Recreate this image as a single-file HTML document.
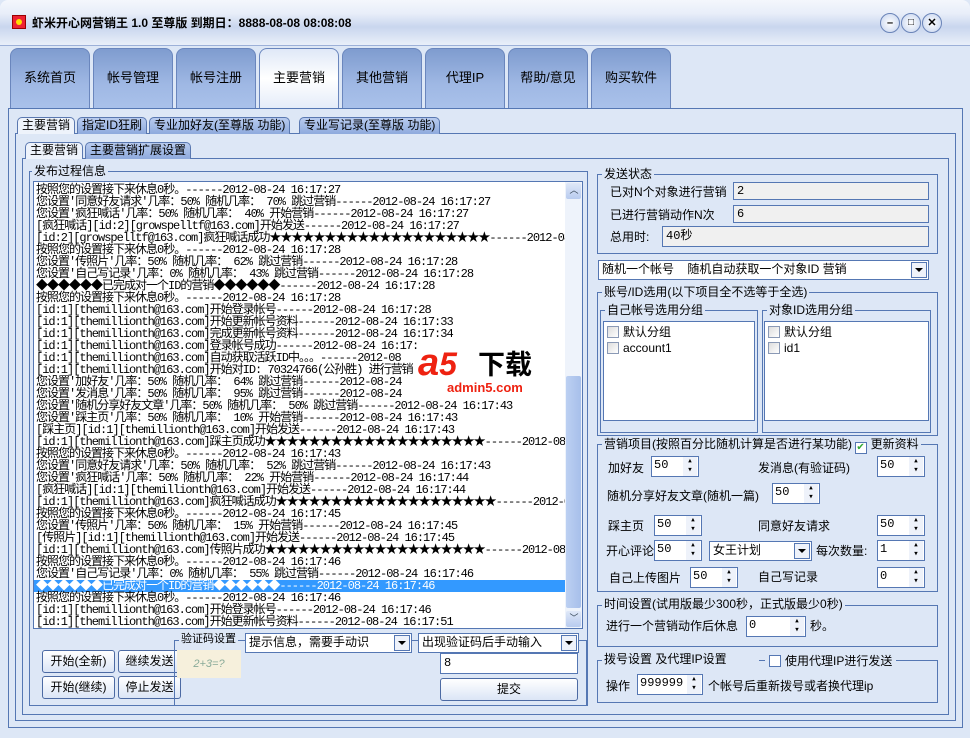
<!DOCTYPE html>
<html><head><meta charset="utf-8"><style>
*{box-sizing:border-box;margin:0;padding:0}
body{width:970px;height:738px;overflow:hidden;background:#dde7f6;font-family:"Liberation Sans","Noto Sans CJK SC",sans-serif;font-size:12px;color:#000;position:relative}
.a{position:absolute}
.tab{position:absolute;top:48px;width:80px;height:60px;border:1px solid #6a86bd;border-bottom:none;border-radius:8px 8px 0 0;background:linear-gradient(#7f9ccf,#9fb8e4 60%,#a9c1ea);text-align:center;line-height:58px;font-size:13px}
.tab.on{background:linear-gradient(#dfe8f7,#fff 50%,#e4ecf9)}
.st{position:absolute;height:17px;border:1px solid #5a78b0;border-bottom:none;border-radius:5px 5px 0 0;background:linear-gradient(#b8cbef,#8eaadd);font-size:12px;line-height:15px;padding:0 4px;white-space:nowrap}
.st.on{background:#eef3fb}
.box{position:absolute;border:1px solid #5577b3}
.grp{position:absolute;border:1px solid #5577b3}
.grp>.t{position:absolute;top:-9px;left:4px;background:#dde7f6;padding:0 2px;line-height:16px;white-space:nowrap;font-size:12px}
.in{position:absolute;border:1px solid #5577b3;background:#f0f0f0;font-size:12px;line-height:16px;padding-left:3px;font-family:"Liberation Mono",monospace}
.wh{background:#fff}
.dd{position:absolute;border:1px solid #5577b3;background:#fff;line-height:17px;padding-left:3px;white-space:nowrap;overflow:hidden}
.dd::after{content:"";position:absolute;right:1px;top:1px;width:14px;bottom:1px;border:1px solid #5577b3;background:#eef2fa}
.dd i{position:absolute;right:5px;top:7px;border:4px solid transparent;border-top:4px solid #000;z-index:2}
.sp{position:absolute;border:1px solid #5577b3;background:#fff;height:21px;line-height:17px;padding-left:2px;font-family:"Liberation Mono",monospace}
.sp::after{content:"▴\A▾";white-space:pre;position:absolute;right:1px;top:0;width:14px;height:19px;background:#eef2fa;font-size:9px;line-height:9px;text-align:center}
.btn{position:absolute;border:1px solid #4c6aa3;border-radius:3px;background:linear-gradient(#fff,#dbe5f6);text-align:center;line-height:20px;font-size:12px}
.log{position:absolute;left:33px;top:181px;width:550px;height:448px;border:1px solid #5577b3;background:#fff;overflow:hidden;padding-top:2px}
.log div{height:12px;line-height:12px;font-family:"Liberation Mono","Noto Sans CJK SC",monospace;font-size:12px;white-space:nowrap;padding-left:2px;letter-spacing:-1px}
.cb{display:inline-block;width:12px;height:12px;border:1px solid #8a99b5;background:linear-gradient(135deg,#ddd,#fff);vertical-align:-2px;margin-right:4px}
</style></head><body>
<div class="a" style="left:0;top:0;width:970px;height:46px;background:linear-gradient(#f4f7fc,#e8eef9 30%,#c9d6ee 60%,#e9eff9);border-bottom:1px solid #9cb0d8;border-radius:8px 8px 0 0"></div>
<div class="a" style="left:12px;top:15px;width:14px;height:14px;background:#e23;border:1px solid #900"><div style="margin:3px;width:6px;height:6px;background:#fd0;border-radius:50%"></div></div>
<div class="a" style="left:32px;top:14px;font-weight:bold;font-size:12px;white-space:nowrap">虾米开心网营销王 1.0 至尊版 到期日：8888-08-08 08:08:08</div>
<div class="a" style="left:880px;top:13px;width:20px;height:20px;border-radius:50%;border:1px solid #6a84b8;background:radial-gradient(#fff,#c3d2ee);text-align:center;line-height:18px;font-weight:bold;font-size:11px">–</div>
<div class="a" style="left:901px;top:13px;width:20px;height:20px;border-radius:50%;border:1px solid #6a84b8;background:radial-gradient(#fff,#c3d2ee);text-align:center;line-height:18px;font-size:10px;font-weight:bold">□</div>
<div class="a" style="left:922px;top:13px;width:20px;height:20px;border-radius:50%;border:1px solid #6a84b8;background:radial-gradient(#fff,#c3d2ee);text-align:center;line-height:18px;font-weight:bold;font-size:11px">✕</div>
<div class="tab" style="left:10px">系统首页</div>
<div class="tab" style="left:93px">帐号管理</div>
<div class="tab" style="left:176px">帐号注册</div>
<div class="tab on" style="left:259px">主要营销</div>
<div class="tab" style="left:342px">其他营销</div>
<div class="tab" style="left:425px">代理IP</div>
<div class="tab" style="left:508px">帮助/意见</div>
<div class="tab" style="left:591px">购买软件</div>
<div class="box" style="left:8px;top:108px;width:955px;height:620px"></div>
<div class="box" style="left:15px;top:133px;width:941px;height:588px"></div>
<div class="box" style="left:22px;top:158px;width:927px;height:557px"></div>
<div class="st on" style="left:17px;top:117px">主要营销</div>
<div class="st" style="left:77px;top:117px">指定ID狂刷</div>
<div class="st" style="left:149px;top:117px">专业加好友(至尊版 功能)</div>
<div class="st" style="left:299px;top:117px">专业写记录(至尊版 功能)</div>
<div class="st on" style="left:25px;top:142px">主要营销</div>
<div class="st" style="left:85px;top:142px">主要营销扩展设置</div>
<div class="grp" style="left:29px;top:171px;width:559px;height:535px"><span class="t" style="left:2px">发布过程信息</span></div>
<div class="log">
<div>按照您的设置接下来休息0秒。------2012-08-24 16:17:27</div>
<div>您设置'同意好友请求'几率：50% 随机几率： 70% 跳过营销------2012-08-24 16:17:27</div>
<div>您设置'疯狂喊话'几率：50% 随机几率： 40% 开始营销------2012-08-24 16:17:27</div>
<div>[疯狂喊话][id:2][growspelltf@163.com]开始发送------2012-08-24 16:17:27</div>
<div>[id:2][growspelltf@163.com]疯狂喊话成功★★★★★★★★★★★★★★★★★★★★------2012-08-24</div>
<div>按照您的设置接下来休息0秒。------2012-08-24 16:17:28</div>
<div>您设置'传照片'几率：50% 随机几率： 62% 跳过营销------2012-08-24 16:17:28</div>
<div>您设置'自己写记录'几率：0% 随机几率： 43% 跳过营销------2012-08-24 16:17:28</div>
<div>◆◆◆◆◆◆已完成对一个ID的营销◆◆◆◆◆◆------2012-08-24 16:17:28</div>
<div>按照您的设置接下来休息0秒。------2012-08-24 16:17:28</div>
<div>[id:1][themillionth@163.com]开始登录帐号------2012-08-24 16:17:28</div>
<div>[id:1][themillionth@163.com]开始更新帐号资料------2012-08-24 16:17:33</div>
<div>[id:1][themillionth@163.com]完成更新帐号资料------2012-08-24 16:17:34</div>
<div>[id:1][themillionth@163.com]登录帐号成功------2012-08-24 16:17:</div>
<div>[id:1][themillionth@163.com]自动获取活跃ID中。。。------2012-08</div>
<div>[id:1][themillionth@163.com]开始对ID: 70324766(公孙胜) 进行营销</div>
<div>您设置'加好友'几率：50% 随机几率： 64% 跳过营销------2012-08-24</div>
<div>您设置'发消息'几率：50% 随机几率： 95% 跳过营销------2012-08-24</div>
<div>您设置'随机分享好友文章'几率：50% 随机几率： 50% 跳过营销------2012-08-24 16:17:43</div>
<div>您设置'踩主页'几率：50% 随机几率： 10% 开始营销------2012-08-24 16:17:43</div>
<div>[踩主页][id:1][themillionth@163.com]开始发送------2012-08-24 16:17:43</div>
<div>[id:1][themillionth@163.com]踩主页成功★★★★★★★★★★★★★★★★★★★★------2012-08-24</div>
<div>按照您的设置接下来休息0秒。------2012-08-24 16:17:43</div>
<div>您设置'同意好友请求'几率：50% 随机几率： 52% 跳过营销------2012-08-24 16:17:43</div>
<div>您设置'疯狂喊话'几率：50% 随机几率： 22% 开始营销------2012-08-24 16:17:44</div>
<div>[疯狂喊话][id:1][themillionth@163.com]开始发送------2012-08-24 16:17:44</div>
<div>[id:1][themillionth@163.com]疯狂喊话成功★★★★★★★★★★★★★★★★★★★★------2012-08-24</div>
<div>按照您的设置接下来休息0秒。------2012-08-24 16:17:45</div>
<div>您设置'传照片'几率：50% 随机几率： 15% 开始营销------2012-08-24 16:17:45</div>
<div>[传照片][id:1][themillionth@163.com]开始发送------2012-08-24 16:17:45</div>
<div>[id:1][themillionth@163.com]传照片成功★★★★★★★★★★★★★★★★★★★★------2012-08-24</div>
<div>按照您的设置接下来休息0秒。------2012-08-24 16:17:46</div>
<div>您设置'自己写记录'几率：0% 随机几率： 55% 跳过营销------2012-08-24 16:17:46</div>
<div style="background:#3399ff;color:#fff;width:532px">◆◆◆◆◆◆已完成对一个ID的营销◆◆◆◆◆◆------2012-08-24 16:17:46</div>
<div>按照您的设置接下来休息0秒。------2012-08-24 16:17:46</div>
<div>[id:1][themillionth@163.com]开始登录帐号------2012-08-24 16:17:46</div>
<div>[id:1][themillionth@163.com]开始更新帐号资料------2012-08-24 16:17:51</div>
<div class="a" style="right:0;top:0;width:17px;height:446px;background:#eef3fb;padding:0"></div>
<div class="a" style="right:1px;top:1px;width:15px;height:16px;background:linear-gradient(#dfe8f8,#b8cbef);border-radius:2px;font-size:9px;text-align:center;line-height:16px;color:#345;padding:0">︿</div>
<div class="a" style="right:1px;top:194px;width:15px;height:232px;background:linear-gradient(90deg,#bcd0f2,#a7bfea);border-radius:2px;padding:0"></div>
<div class="a" style="right:1px;bottom:1px;width:15px;height:16px;background:linear-gradient(#dfe8f8,#b8cbef);border-radius:2px;font-size:9px;text-align:center;line-height:16px;color:#345;padding:0">﹀</div>
</div>
<div class="a" style="left:418px;top:345px;font-size:38px;font-weight:bold;font-style:italic;color:#e21;line-height:36px">a<span style="font-size:32px">5</span></div>
<div class="a" style="left:478px;top:349px;font-size:27px;font-weight:bold;line-height:28px;font-family:'Noto Sans CJK SC',sans-serif">下载</div>
<div class="a" style="left:447px;top:381px;font-size:13px;font-weight:bold;color:#e21;line-height:14px">admin5.com</div>
<div class="btn" style="left:42px;top:650px;width:73px;height:23px">开始(全新)</div>
<div class="btn" style="left:118px;top:650px;width:63px;height:23px">继续发送</div>
<div class="btn" style="left:42px;top:676px;width:73px;height:23px">开始(继续)</div>
<div class="btn" style="left:118px;top:676px;width:63px;height:23px">停止发送</div>
<div class="grp" style="left:174px;top:640px;width:413px;height:66px"><span class="t" style="top:-10px;left:4px;font-size:11px">验证码设置</span></div>
<div class="a" style="left:177px;top:650px;width:64px;height:28px;background:#f6f0dc;color:#8a9;font-size:11px;line-height:28px;text-align:center;font-style:italic">2+3=?</div>
<div class="dd" style="left:245px;top:633px;width:167px;height:20px">提示信息，需要手动识<i></i></div>
<div class="dd" style="left:418px;top:633px;width:161px;height:20px">出现验证码后手动输入<i></i></div>
<div class="in wh" style="left:440px;top:653px;width:138px;height:21px;line-height:19px">8</div>
<div class="btn" style="left:440px;top:678px;width:138px;height:23px">提交</div>
<div class="grp" style="left:597px;top:174px;width:341px;height:80px"><span class="t">发送状态</span></div>
<div class="a" style="left:610px;top:183px">已对N个对象进行营销</div>
<div class="in" style="left:733px;top:182px;width:196px;height:18px">2</div>
<div class="a" style="left:610px;top:206px">已进行营销动作N次</div>
<div class="in" style="left:733px;top:205px;width:196px;height:18px">6</div>
<div class="a" style="left:610px;top:228px">总用时:</div>
<div class="in" style="left:662px;top:226px;width:267px;height:21px;line-height:19px">40秒</div>
<div class="dd" style="left:598px;top:260px;width:331px;height:20px">随机一个帐号&nbsp;&nbsp;&nbsp;&nbsp;随机自动获取一个对象ID 营销<i></i></div>
<div class="grp" style="left:597px;top:292px;width:341px;height:144px"><span class="t">账号/ID选用(以下项目全不选等于全选)</span></div>
<div class="grp" style="left:600px;top:310px;width:158px;height:123px"><span class="t">自己帐号选用分组</span></div>
<div class="a" style="left:603px;top:321px;width:152px;height:100px;background:#fff;border:1px solid #5577b3;padding:2px 3px;line-height:16px"><div><span class="cb"></span>默认分组</div><div><span class="cb"></span>account1</div></div>
<div class="grp" style="left:762px;top:310px;width:169px;height:123px"><span class="t">对象ID选用分组</span></div>
<div class="a" style="left:764px;top:321px;width:165px;height:100px;background:#fff;border:1px solid #5577b3;padding:2px 3px;line-height:16px"><div><span class="cb"></span>默认分组</div><div><span class="cb"></span>id1</div></div>
<div class="grp" style="left:597px;top:444px;width:341px;height:148px"><span class="t">营销项目(按照百分比随机计算是否进行某功能) <span class="cb" style="background:#fff;border-color:#5577b3;color:#3a3;font-size:10px;line-height:10px;margin:0">✔</span> 更新资料</span></div>
<div class="a" style="left:608px;top:459px">加好友</div><div class="sp" style="left:651px;top:456px;width:48px">50</div>
<div class="a" style="left:758px;top:459px">发消息(有验证码)</div><div class="sp" style="left:877px;top:456px;width:48px">50</div>
<div class="a" style="left:607px;top:487px">随机分享好友文章(随机一篇)</div><div class="sp" style="left:772px;top:483px;width:48px">50</div>
<div class="a" style="left:608px;top:517px">踩主页</div><div class="sp" style="left:654px;top:515px;width:48px">50</div>
<div class="a" style="left:758px;top:517px">同意好友请求</div><div class="sp" style="left:877px;top:515px;width:48px">50</div>
<div class="a" style="left:606px;top:542px">开心评论</div><div class="sp" style="left:654px;top:540px;width:48px">50</div>
<div class="dd" style="left:709px;top:541px;width:103px;height:20px">女王计划<i></i></div>
<div class="a" style="left:816px;top:542px">每次数量:</div><div class="sp" style="left:877px;top:540px;width:48px">1</div>
<div class="a" style="left:609px;top:569px">自己上传图片</div><div class="sp" style="left:690px;top:567px;width:48px">50</div>
<div class="a" style="left:758px;top:568px">自己写记录</div><div class="sp" style="left:877px;top:567px;width:48px">0</div>
<div class="grp" style="left:597px;top:605px;width:341px;height:42px"><span class="t" style="top:-10px">时间设置(试用版最少300秒，正式版最少0秒)</span></div>
<div class="a" style="left:606px;top:617px">进行一个营销动作后休息</div><div class="sp" style="left:746px;top:616px;width:60px">0</div><div class="a" style="left:810px;top:617px">秒。</div>
<div class="grp" style="left:597px;top:660px;width:341px;height:43px"><span class="t" style="top:-10px">拨号设置 及代理IP设置 <span style="background:#dde7f6;padding-left:30px"></span></span></div>
<div class="a" style="left:765px;top:652px;background:#dde7f6;padding:0 4px"><span class="cb" style="background:#fff;border-color:#5577b3;"></span>使用代理IP进行发送</div>
<div class="a" style="left:606px;top:677px">操作</div><div class="sp" style="left:637px;top:674px;width:66px">999999</div>
<div class="a" style="left:708px;top:677px">个帐号后重新拨号或者换代理ip</div>
</body></html>
